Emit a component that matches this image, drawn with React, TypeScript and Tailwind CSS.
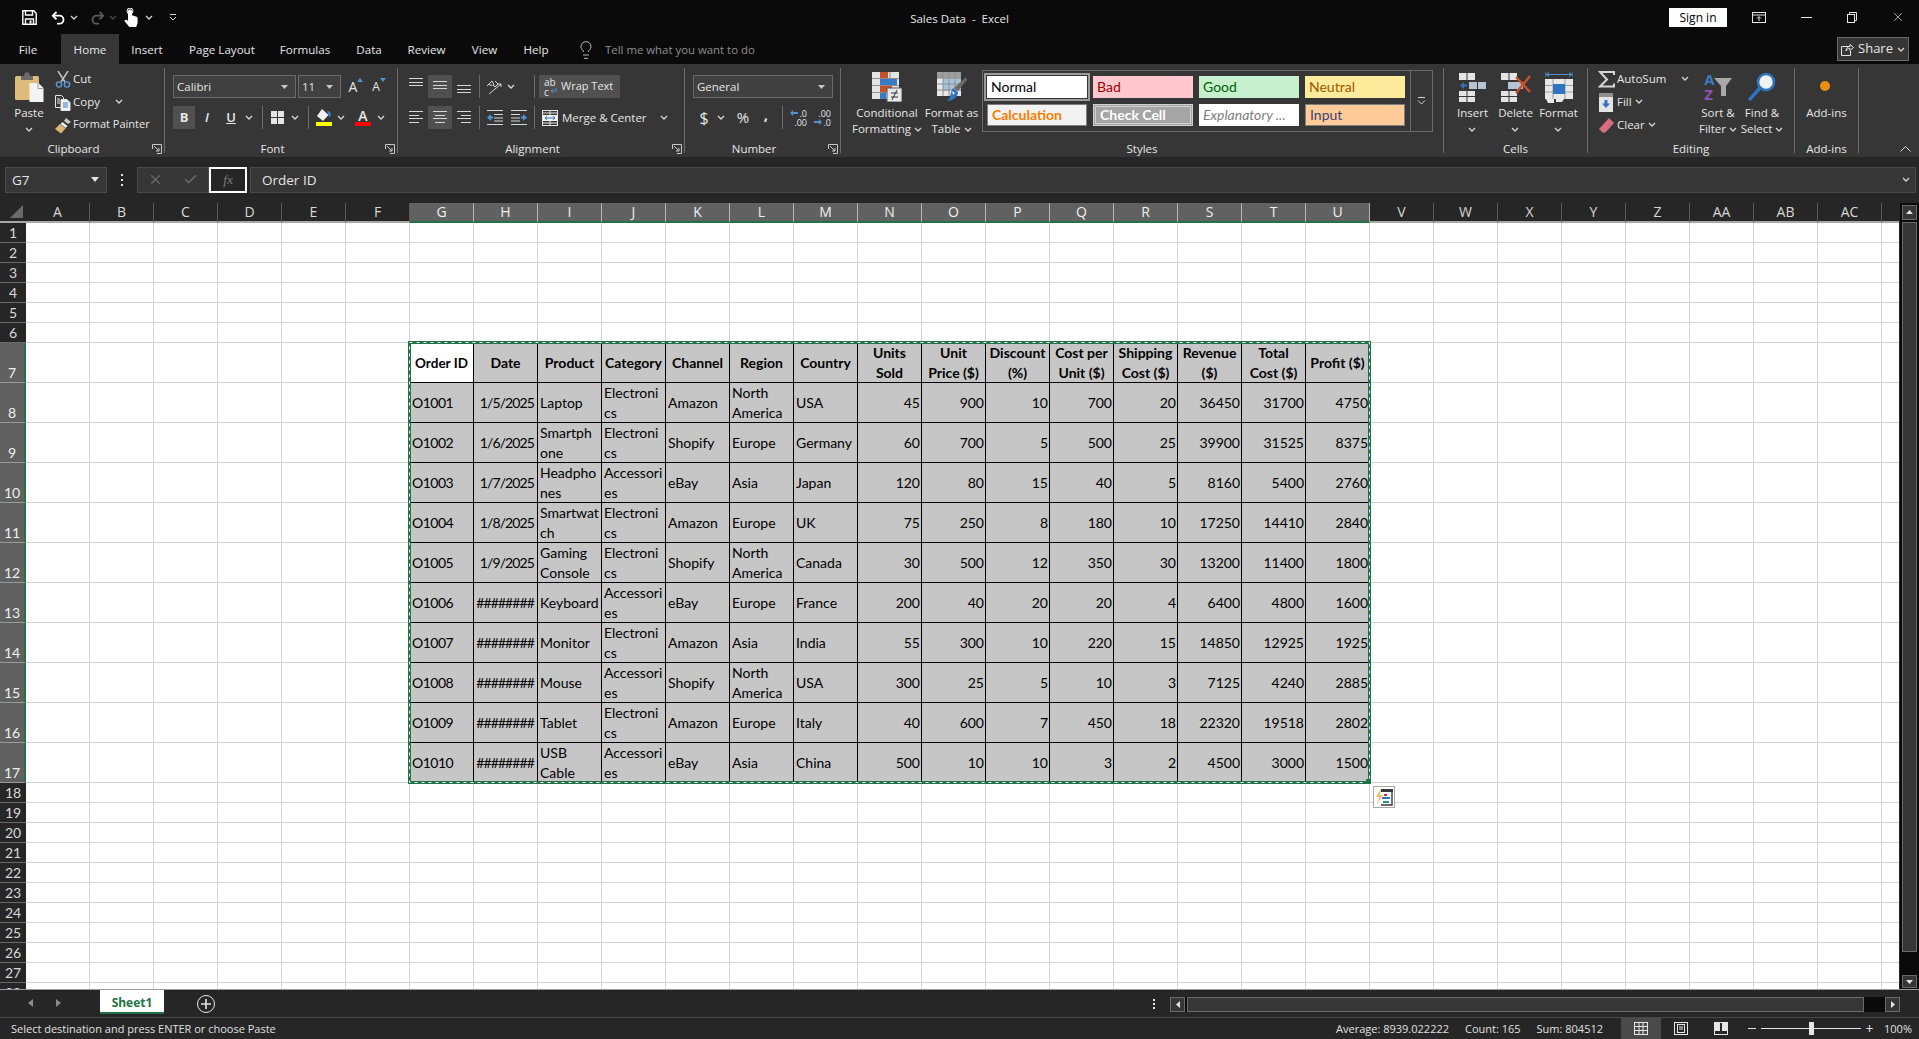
import React from 'react';
import { Lightbulb, Check, X } from 'lucide-react';

const COLS = ['A','B','C','D','E','F','G','H','I','J','K','L','M','N','O','P','Q','R','S','T','U','V','W','X','Y','Z','AA','AB','AC'];

const HEADERS = ['Order ID','Date','Product','Category','Channel','Region','Country','Units\nSold','Unit\nPrice ($)','Discount\n(%)','Cost per\nUnit ($)','Shipping\nCost ($)','Revenue\n($)','Total\nCost ($)','Profit ($)'];

type Cell = string | number;

const HASH = '########';
const DATA: Cell[][] = [
  ['O1001','1/5/2025','Laptop','Electroni\ncs','Amazon','North\nAmerica','USA',45,900,10,700,20,36450,31700,4750],
  ['O1002','1/6/2025','Smartph\none','Electroni\ncs','Shopify','Europe','Germany',60,700,5,500,25,39900,31525,8375],
  ['O1003','1/7/2025','Headpho\nnes','Accessori\nes','eBay','Asia','Japan',120,80,15,40,5,8160,5400,2760],
  ['O1004','1/8/2025','Smartwat\nch','Electroni\ncs','Amazon','Europe','UK',75,250,8,180,10,17250,14410,2840],
  ['O1005','1/9/2025','Gaming\nConsole','Electroni\ncs','Shopify','North\nAmerica','Canada',30,500,12,350,30,13200,11400,1800],
  ['O1006',HASH,'Keyboard','Accessori\nes','eBay','Europe','France',200,40,20,20,4,6400,4800,1600],
  ['O1007',HASH,'Monitor','Electroni\ncs','Amazon','Asia','India',55,300,10,220,15,14850,12925,1925],
  ['O1008',HASH,'Mouse','Accessori\nes','Shopify','North\nAmerica','USA',300,25,5,10,3,7125,4240,2885],
  ['O1009',HASH,'Tablet','Electroni\ncs','Amazon','Europe','Italy',40,600,7,450,18,22320,19518,2802],
  ['O1010',HASH,'USB\nCable','Accessori\nes','eBay','Asia','China',500,10,10,3,2,4500,3000,1500],
];

const Chev = ({ className = '' }: { className?: string }) => (
  <svg width="8" height="5" viewBox="0 0 8 5" className={className}>
    <path d="M1 1l3 3 3-3" fill="none" stroke="#d6d6d6" strokeWidth="1.3" />
  </svg>
);

const Caret = () => (
  <svg width="7" height="4" viewBox="0 0 7 4"><path d="M0 0h7L3.5 4z" fill="#c8c8c8" /></svg>
);

const Launcher = () => (
  <svg width="10" height="10" viewBox="0 0 10 10">
    <path d="M.5 5V.5H9.5V9.5H5" fill="none" stroke="#c8c8c8" />
    <path d="M2 2l5 5M7 4v3H4" fill="none" stroke="#c8c8c8" />
  </svg>
);

const Sep = ({ className = '' }: { className?: string }) => <div className={`w-px h-[23px] bg-[#6b6b6b] ${className}`} />;

const Group = ({ w, label, launcher, children }: { w: string; label: string; launcher?: boolean; children: React.ReactNode }) => (
  <div className={`${w} h-[85px] flex flex-col border-r border-[#6b6b6b] shrink-0`}>
    <div className="h-[75px] shrink-0">{children}</div>
    <div className="h-[12px] shrink-0 flex items-center">
      <div className="flex-1 text-center leading-[12px]">{label}</div>
      {launcher && <div className="w-[17px] flex justify-center pl-[3px]"><Launcher /></div>}
    </div>
  </div>
);

const BigButton = ({ w, icon, lines, chevInline }: { w: string; icon: React.ReactNode; lines: string[]; chevInline?: boolean }) => (
  <div className={`${w} shrink-0 flex flex-col items-center`}>
    <div className="mt-[4px] h-[30px] flex items-center justify-center">{icon}</div>
    <div className="mt-[3px] text-center leading-[16px] whitespace-nowrap">
      <div>{lines[0]}</div>
      {chevInline ? (
        <div className="flex items-center justify-center gap-[3px]">{lines[1]}<Chev /></div>
      ) : (
        <div className="h-[16px] flex items-center justify-center"><Chev /></div>
      )}
    </div>
  </div>
);

/* ---------- icons ---------- */

const SaveIcon = () => (
  <svg width="15" height="15" viewBox="0 0 15 15" fill="none" stroke="#fff" strokeWidth="1.4">
    <path d="M.8.8h11l2.4 2.4v11H.8z" />
    <path d="M3.5 1v4h7V1M3.5 14V9h8v5" />
    <rect x="7.5" y="10.5" width="2" height="3" fill="#fff" stroke="none" />
  </svg>
);

const UndoIcon = ({ c = '#fff', flip = false }: { c?: string; flip?: boolean }) => (
  <svg width="15" height="14" viewBox="0 0 15 14" fill="none" stroke={c} strokeWidth="1.8" className={flip ? '-scale-x-100' : ''}>
    <path d="M5.5 1L1.8 4.7l3.7 3.7" />
    <path d="M2 4.7h6.5a4 4 0 0 1 0 8H6" />
  </svg>
);

const TouchIcon = () => (
  <svg width="14" height="19" viewBox="0 0 14 19" fill="#fff">
    <path d="M4 3.2a2 2 0 0 1 4 0v4l4 1.2c1 .3 1.6 1 1.6 2V15l-1.4 4H5.4L.8 13.4c-.6-.8.2-2 1.4-1.6L4 12.8z" />
    <circle cx="6" cy="3" r="3" fill="none" stroke="#fff" />
  </svg>
);

const ScissorsIcon = () => (
  <svg width="16" height="17" viewBox="0 0 16 17" fill="none">
    <path d="M3 0l7 11M13 0L6 11" stroke="#bdbdbd" strokeWidth="1.6" />
    <circle cx="4" cy="13.5" r="2.6" stroke="#5c9bd6" strokeWidth="1.4" />
    <circle cx="12" cy="13.5" r="2.6" stroke="#5c9bd6" strokeWidth="1.4" />
  </svg>
);

const CopyIcon = () => (
  <svg width="16" height="16" viewBox="0 0 16 16">
    <path d="M.5.5h6l2 2v10h-8z" fill="#363636" stroke="#e6e6e6" />
    <path d="M6 4.5h6l3 3v8H6z" fill="#f2f2f2" stroke="#e6e6e6" />
    <path d="M8 8h5M8 10h5M8 12h5" stroke="#3a7cc4" />
    <path d="M2 4h3M2 6h3M2 8h3" stroke="#e6e6e6" />
  </svg>
);

const BrushIcon = () => (
  <svg width="18" height="17" viewBox="0 0 18 17">
    <path d="M12 1l5 4-3 2-4-3z" fill="#c8c8c8" />
    <path d="M8.5 5l5 4-2 2-5-4z" fill="#efefef" />
    <path d="M6 7l5.5 4.5L7 16.5 1 12z" fill="#d9b676" />
  </svg>
);

const PasteIcon = () => (
  <svg width="29" height="30" viewBox="0 0 29 30">
    <rect x="0" y="4" width="24" height="24" rx="1.5" fill="#dcbb7d" />
    <path d="M6 4h3l1-3.5h4L15 4h3v4H6z" fill="#6b6b6b" />
    <path d="M14.5 11h9l5 5v14h-14z" fill="#f3f3f3" />
    <path d="M23 11v5.5h5.5" fill="none" stroke="#9c9c9c" />
  </svg>
);

const BordersIcon = () => (
  <svg width="13" height="13" viewBox="0 0 13 13" fill="#e6e6e6">
    <rect width="6" height="6" /><rect x="7" width="6" height="6" />
    <rect y="7" width="6" height="6" /><rect x="7" y="7" width="6" height="6" />
  </svg>
);

const FillIcon = () => (
  <div className="flex flex-col items-center">
    <svg width="16" height="13" viewBox="0 0 16 13">
      <path d="M6 0l6.5 6L7 12 1 7z" fill="#f2f2f2" />
      <path d="M11 2c3 0 4 2 4 5l-2 1-1-3z" fill="#3a7cc4" />
    </svg>
    <div className="w-[16px] h-[4px] bg-[#ffff00]" />
  </div>
);

const FontColorIcon = () => (
  <div className="flex flex-col items-center leading-none">
    <span className="text-[14px] font-semibold h-[13px] leading-[13px] text-[#e6e6e6]">A</span>
    <div className="w-[16px] h-[4px] bg-[#ff0000]" />
  </div>
);

const Lines = ({ rows }: { rows: [number, number][] }) => (
  <svg width="16" height={rows.length * 3.5} viewBox={`0 0 16 ${rows.length * 3.5}`}>
    {rows.map(([a, b], i) => <rect key={i} x={a} y={Math.round(i * 3.5)} width={b - a} height="1" fill="#d6d6d6" />)}
  </svg>
);

const OrientIcon = () => (
  <svg width="18" height="16" viewBox="0 0 18 16" fill="none" stroke="#d6d6d6">
    <path d="M1 7l5-5 2 4M2.5 5.5l4 1" />
    <path d="M9 2l3 3-3 3-2-2" />
    <path d="M3 15L15 5M15 5h-3M15 5v3" />
  </svg>
);

const WrapIcon = () => (
  <div className="w-[17px] flex flex-col text-[10px] leading-[10px] text-[#e6e6e6]">
    <span>ab</span>
    <div className="flex items-center">
      <span>c</span>
      <svg width="8" height="7" viewBox="0 0 8 7" fill="none" stroke="#4f93d6"><path d="M7 0v3H2M4 1L2 3l2 2" /></svg>
    </div>
  </div>
);

const MergeIcon = () => (
  <svg width="16" height="16" viewBox="0 0 16 16">
    <rect x=".5" y=".5" width="15" height="15" fill="#363636" stroke="#e6e6e6" />
    <rect x="1" y="5" width="14" height="6" fill="#f2f2f2" />
    <path d="M1 3h14M8 1v4M8 11v4M1 13h14" stroke="#e6e6e6" />
    <path d="M3 8h10M5 6.3L3 8l2 1.7M11 6.3L13 8l-2 1.7" stroke="#2f74c0" fill="none" />
  </svg>
);

const IndentIcon = ({ flip = false }: { flip?: boolean }) => (
  <svg width="16" height="15" viewBox="0 0 16 15" className={flip ? '-scale-x-100' : ''}>
    <path d="M0 .5h16M7 4.5h9M7 8h9M7 11h9M0 14.5h16" stroke="#d6d6d6" />
    <path d="M0 7.5l4-3.5v2.4h2v2.2H4V11z" fill="#4f93d6" />
  </svg>
);

const DecimalIcon = ({ inc }: { inc: boolean }) => (
  <div className="w-[20px] flex flex-col text-[9px] leading-[9px] text-[#e6e6e6] items-end">
    <div className="flex items-center gap-[1px]">
      {inc && <svg width="8" height="6" viewBox="0 0 8 6"><path d="M0 3l3-3v2h5v2H3v2z" fill="#4f93d6" /></svg>}
      <span>{inc ? '.0' : '.00'}</span>
    </div>
    <div className="flex items-center gap-[1px]">
      {!inc && <svg width="8" height="6" viewBox="0 0 8 6"><path d="M8 3L5 0v2H0v2h5v2z" fill="#4f93d6" /></svg>}
      <span>{inc ? '.00' : '.0'}</span>
    </div>
  </div>
);

const CondIcon = () => (
  <svg width="30" height="30" viewBox="0 0 30 30">
    <rect x="0" y="0" width="27" height="27" fill="#e4e4e4" />
    <path d="M0 6.5h27M0 13.5h27M0 20.5h27M9 0v27M18 0v27" stroke="#8e8e8e" />
    <rect x="8" y="0" width="8" height="6" fill="#c8512a" />
    <rect x="8" y="7" width="17" height="6" fill="#3a7cc4" />
    <rect x="8" y="14" width="12" height="6" fill="#c8512a" />
    <rect x="8" y="21" width="6" height="6" fill="#3a7cc4" />
    <rect x="15" y="16" width="15" height="14" fill="#e8e8e8" stroke="#555" />
    <path d="M19 21h7M19 25h7M25 18l-5 10" stroke="#333" />
  </svg>
);

const TableIcon = () => (
  <svg width="30" height="30" viewBox="0 0 30 30">
    <rect x="0" y="0" width="24" height="6" fill="#9e9e9e" />
    <rect x="0" y="6" width="24" height="18" fill="#e8e8e8" />
    <rect x="6" y="6" width="18" height="13" fill="#a9c2d6" />
    <path d="M0 6h24M0 12h24M0 18h24M6 0v24M12 0v24M18 0v24" stroke="#8e8e8e" />
    <path d="M29 5l1 3-9 11-4-3z" fill="#6a6a6a" />
    <path d="M16 16l5 4c0 5-5 9-11 9 4-3 3-8 6-13z" fill="#2f74c0" />
    <path d="M15 19l3 2-2 2z" fill="#e8e8e8" />
  </svg>
);

const InsertIcon = () => (
  <svg width="27" height="29" viewBox="0 0 27 29">
    <rect x="0" y="0" width="16" height="7" fill="#e4e4e4" /><path d="M8 0v7" stroke="#363636" />
    <rect x="0" y="18" width="16" height="11" fill="#e4e4e4" /><path d="M8 18v11M0 23.5h16" stroke="#363636" />
    <rect x="10" y="9" width="17" height="7" fill="#b4c4d2" /><path d="M18.5 9v7" stroke="#363636" />
    <path d="M1 12.5l4-3.5v2.4h3v2.2H5V16z" fill="#2f74c0" />
  </svg>
);

const DeleteIcon = () => (
  <svg width="30" height="29" viewBox="0 0 30 29">
    <rect x="0" y="0" width="16" height="7" fill="#e4e4e4" /><path d="M8 0v7" stroke="#363636" />
    <rect x="0" y="18" width="16" height="11" fill="#e4e4e4" /><path d="M8 18v11M0 23.5h16" stroke="#363636" />
    <rect x="7" y="9" width="15" height="7" fill="#b4c4d2" />
    <path d="M15 4l14 15M29 3L15 20" stroke="#c8512a" strokeWidth="2.4" />
  </svg>
);

const FormatIcon = () => (
  <svg width="28" height="31" viewBox="0 0 28 31">
    <path d="M0 0v5M28 0v5M1 2.5h26M1 2.5l3-2M1 2.5l3 2M27 2.5l-3-2M27 2.5l-3 2" stroke="#4f93d6" fill="none" />
    <rect x="0" y="7" width="28" height="20" fill="#e8e8e8" />
    <path d="M0 13.5h28M0 20h28M8 7v20M20 7v20" stroke="#9e9e9e" />
    <rect x="8" y="12" width="12" height="10" fill="#2f74c0" />
    <path d="M1 27h8v4H3zM11 27h8l-2 3h-6z" fill="#e8e8e8" />
  </svg>
);

const SortIcon = () => (
  <div className="flex items-center h-[30px]">
    <div className="flex flex-col font-bold text-[15px] leading-[15px] mr-[-1px]">
      <span className="text-[#3a7cc4]">A</span>
      <span className="text-[#8a54b0]">Z</span>
    </div>
    <svg width="18" height="18" viewBox="0 0 18 18">
      <path d="M0 0h18l-6 8v10h-5V8z" fill="#a9a9a9" />
    </svg>
  </div>
);

const FindIcon = () => (
  <svg width="28" height="30" viewBox="0 0 28 30" fill="none">
    <circle cx="18" cy="10" r="8" fill="#f2f2f2" stroke="#2f74c0" strokeWidth="2.6" />
    <path d="M12 16L2 27" stroke="#2f74c0" strokeWidth="3.4" strokeLinecap="round" />
  </svg>
);

const SumIcon = () => (
  <svg width="17" height="17" viewBox="0 0 17 17" fill="none"><path d="M16 4V1H2l7 7.5L2 15.5h14v-3" stroke="#d6d6d6" strokeWidth="2" /></svg>
);

const FillDownIcon = () => (
  <svg width="14" height="19" viewBox="0 0 14 19">
    <rect width="14" height="19" fill="#e4e4e4" /><rect width="14" height="4" fill="#8e8e8e" />
    <path d="M7 15L3 10.5h2.5V7h3v3.5H11z" fill="#2f74c0" />
  </svg>
);

const EraserIcon = () => (
  <svg width="15" height="15" viewBox="0 0 15 15"><path d="M10 0l5 5-8 9-3 1-4-4z" fill="#d96b82" /></svg>
);

const PasteOptions = () => (
  <svg width="18" height="18" viewBox="0 0 18 18">
    <path d="M6 0L1 9h3l-2 7 6-9H5z" fill="#e9c27a" />
    <path d="M6 1h12v3H6z" fill="#3a3a3a" />
    <path d="M17 1v16H6" fill="none" stroke="#3a3a3a" strokeWidth="1.4" />
    <rect x="9" y="6" width="3" height="2" fill="#c0392b" />
    <rect x="7" y="9" width="8" height="2" fill="#2f74c0" />
    <rect x="8" y="13" width="6" height="2" fill="#2c8a8a" />
  </svg>
);

/* ---------- sections ---------- */

const TitleBar = () => (
  <div className="h-[34px] grid grid-cols-[1fr_auto_1fr] items-center text-[#e6e6e6]">
    <div className="flex items-center pl-[22px] pt-[1px]">
      <SaveIcon />
      <div className="ml-[14px]"><UndoIcon /></div>
      <Chev className="ml-[4px]" />
      <div className="ml-[12px]"><UndoIcon c="#5a5a5a" flip /></div>
      <Chev className="ml-[4px] opacity-30" />
      <div className="ml-[7px]"><TouchIcon /></div>
      <Chev className="ml-[7px]" />
      <svg width="8" height="8" viewBox="0 0 8 8" className="ml-[16px]"><path d="M1 .5h6M1 3l3 3 3-3" fill="none" stroke="#d6d6d6" /></svg>
    </div>
    <div className="text-[11.5px] whitespace-pre pt-[4px]">Sales Data  -  Excel</div>
    <div className="flex items-center justify-end">
      <div className="w-[58px] h-[19px] bg-white text-black text-[12px] flex items-center justify-center mt-[1px]">Sign in</div>
      <div className="w-[64px] flex justify-center">
        <svg width="14" height="11" viewBox="0 0 14 11" fill="none" stroke="#e6e6e6"><rect x=".5" y=".5" width="13" height="10" /><path d="M1 3h12M7 9V5M5 6.5l2-2 2 2" /></svg>
      </div>
      <div className="w-[30px] flex justify-center">
        <svg width="11" height="1" viewBox="0 0 11 1"><rect width="11" height="1" fill="#e6e6e6" /></svg>
      </div>
      <div className="w-[62px] flex justify-center">
        <svg width="10" height="11" viewBox="0 0 10 11" fill="none" stroke="#e6e6e6"><rect x=".5" y="2.5" width="7" height="8" /><path d="M2.5 2.5v-2h7v8h-2" /></svg>
      </div>
      <div className="w-[36px] flex justify-center pr-[6px]"><X size={14} strokeWidth={1.2} color="#e6e6e6" /></div>
    </div>
  </div>
);

const TABS: [string, string][] = [['File','w-[61px] pr-[5px]'],['Home','w-[58px] bg-[#363636]'],['Insert','w-[56px]'],['Page Layout','w-[94px]'],['Formulas','w-[72px]'],['Data','w-[56px]'],['Review','w-[59px]'],['View','w-[57px]'],['Help','w-[46px]']];

const TabStrip = () => (
  <div className="h-[30px] flex text-[11.6px] text-[#e6e6e6]">
    {TABS.map(([name, cls]) => (
      <div key={name} className={`${cls} h-full flex items-center justify-center pt-[1px]`}>{name}</div>
    ))}
    <div className="ml-[17px] flex items-center text-[#8f8f8f] pt-[1px]">
      <Lightbulb size={20} strokeWidth={1.1} color="#c8c8c8" />
      <span className="ml-[9px] text-[11.4px]">Tell me what you want to do</span>
    </div>
    <div className="ml-auto mr-[10px] mt-[3px] w-[72px] h-[24px] bg-[#363636] border border-[#6a6a6a] flex items-center justify-center gap-[4px] text-[13px]">
      <svg width="13" height="13" viewBox="0 0 13 13" fill="none" stroke="#e6e6e6"><path d="M8 3.5H.5v9h9V8M5 8c0-3 2-4.500 4-4.500V1.500l3.500 3-3.500 3V5.500C7 5.500 6 6.500 5 8z" /></svg>
      <span>Share</span>
      <Chev />
    </div>
  </div>
);

const Combo = ({ w, text, className = '' }: { w: string; text: string; className?: string }) => (
  <div className={`${w} h-[23px] bg-[#404040] border border-[#6a6a6a] flex items-center justify-between pl-[3px] pr-[7px] ${className}`}>
    <span>{text}</span><Caret />
  </div>
);

const Small = ({ w, className = '', children }: { w: string; className?: string; children: React.ReactNode }) => (
  <div className={`${w} h-[23px] shrink-0 flex items-center justify-center ${className}`}>{children}</div>
);

const EditRow = ({ icon, children }: { icon: React.ReactNode; children: React.ReactNode }) => (
  <div className="h-[23px] flex items-center">
    <div className="w-[20px] flex justify-center shrink-0">{icon}</div>
    <div className="flex items-center flex-1 pb-[2px]">{children}</div>
  </div>
);

const STYLES: { t: string; c: string }[] = [
  { t: 'Normal', c: 'bg-white text-black outline-2 outline-offset-1 outline-[#9b9b9b]' },
  { t: 'Bad', c: 'bg-[#ffc7ce] text-[#9c0006]' },
  { t: 'Good', c: 'bg-[#c6efce] text-[#006100]' },
  { t: 'Neutral', c: 'bg-[#ffeb9c] text-[#9c5700]' },
  { t: 'Calculation', c: 'bg-[#f2f2f2] text-[#fa7d00] font-bold border border-[#7f7f7f]' },
  { t: 'Check Cell', c: 'bg-[#a5a5a5] text-white font-bold border-[3px] border-double border-[#d0d0d0]' },
  { t: 'Explanatory ...', c: 'bg-white text-[#7f7f7f] italic' },
  { t: 'Input', c: 'bg-[#ffcc99] text-[#3f3f76] border border-[#7f7f7f]' },
];

const Ribbon = () => (
  <div className="h-[93px] bg-[#363636] pt-[4px] flex text-[11.5px] text-[#e6e6e6] whitespace-nowrap">
    <Group w="w-[165px]" label="Clipboard" launcher>
      <div className="flex">
        <div className="w-[53px] pl-[5px]">
          <BigButton w="w-full" icon={<PasteIcon />} lines={['Paste']} />
        </div>
        <div>
          <EditRow icon={<ScissorsIcon />}>Cut</EditRow>
          <div className="w-[70px]"><EditRow icon={<CopyIcon />}>Copy<Chev className="ml-auto" /></EditRow></div>
          <EditRow icon={<BrushIcon />}><span className="text-[11px]">Format Painter</span></EditRow>
        </div>
      </div>
    </Group>

    <Group w="w-[233px]" label="Font" launcher>
      <div className="pt-[7px] pl-[8px]">
        <div className="flex items-center h-[23px]">
          <Combo w="w-[123px]" text="Calibri" />
          <Combo w="w-[43px]" text="11" className="ml-[2px]" />
          <Small w="w-[22px]" className="ml-[4px] text-[14px]"><span>A</span><svg width="6" height="4" viewBox="0 0 6 4" className="self-start mt-[3px]"><path d="M3 0l3 4H0z" fill="#4f93d6" /></svg></Small>
          <Small w="w-[22px]" className="ml-[1px] text-[12px]"><span>A</span><svg width="6" height="4" viewBox="0 0 6 4" className="self-start mt-[3px]"><path d="M3 4l3-4H0z" fill="#4f93d6" /></svg></Small>
        </div>
        <div className="flex items-center h-[23px] mt-[8px]">
          <Small w="w-[22px]" className="bg-[#505050] font-bold text-[13px]">B</Small>
          <Small w="w-[24px]" className="italic font-semibold text-[13px]">I</Small>
          <Small w="w-[24px]" className="underline font-semibold text-[13px]">U</Small>
          <Small w="w-[12px]"><Chev /></Small>
          <Sep className="ml-[7px]" />
          <Small w="w-[16px]" className="ml-[6px]"><BordersIcon /></Small>
          <Small w="w-[10px]" className="ml-[5px]"><Chev /></Small>
          <Sep className="ml-[8px]" />
          <Small w="w-[16px]" className="ml-[7px]"><FillIcon /></Small>
          <Small w="w-[10px]" className="ml-[4px]"><Chev /></Small>
          <Small w="w-[16px]" className="ml-[9px]"><FontColorIcon /></Small>
          <Small w="w-[10px]" className="ml-[5px]"><Chev /></Small>
        </div>
      </div>
    </Group>

    <Group w="w-[287px]" label="Alignment" launcher>
      <div className="pt-[7px] pl-[6px]">
        <div className="flex h-[23px]">
          <Small w="w-[24px]" className="items-start pt-[3px]"><Lines rows={[[1,15],[1,15],[1,15]]} /></Small>
          <Small w="w-[24px]" className="bg-[#505050]"><Lines rows={[[1,15],[1,15],[1,15]]} /></Small>
          <Small w="w-[24px]" className="items-end pb-[3px]"><Lines rows={[[1,15],[1,15],[1,15]]} /></Small>
          <Sep className="ml-[3px]" />
          <Small w="w-[20px]" className="ml-[5px]"><OrientIcon /></Small>
          <Small w="w-[10px]" className="ml-[1px]"><Chev /></Small>
          <Sep className="ml-[18px]" />
          <div className="ml-[4px] w-[81px] h-[23px] bg-[#505050] flex items-center pl-[5px]">
            <WrapIcon /><span className="text-[11px]">Wrap Text</span>
          </div>
        </div>
        <div className="flex h-[23px] mt-[8px]">
          <Small w="w-[24px]"><Lines rows={[[1,15],[1,11],[1,15],[1,11]]} /></Small>
          <Small w="w-[24px]" className="bg-[#505050]"><Lines rows={[[1,15],[3,13],[1,15],[3,13]]} /></Small>
          <Small w="w-[24px]"><Lines rows={[[1,15],[5,15],[1,15],[5,15]]} /></Small>
          <Sep className="ml-[3px]" />
          <Small w="w-[24px]" className="ml-[3px]"><IndentIcon /></Small>
          <Small w="w-[24px]"><IndentIcon flip /></Small>
          <Sep className="ml-[3px]" />
          <Small w="w-[16px]" className="ml-[7px]"><MergeIcon /></Small>
          <span className="ml-[4px] w-[88px] leading-[23px]">Merge &amp; Center</span>
          <Small w="w-[10px]" className="ml-[9px]"><Chev /></Small>
        </div>
      </div>
    </Group>

    <Group w="w-[156px]" label="Number" launcher>
      <div className="pt-[7px] pl-[8px]">
        <Combo w="w-[140px]" text="General" />
        <div className="flex h-[23px] mt-[8px]">
          <Small w="w-[22px]" className="text-[16px]">$</Small>
          <Small w="w-[10px]" className="ml-[1px]"><Chev /></Small>
          <Small w="w-[22px]" className="ml-[6px] text-[15px]">%</Small>
          <Small w="w-[22px]" className="ml-[1px] text-[15px] font-bold pb-[6px]">,</Small>
          <Sep className="ml-[5px]" />
          <Small w="w-[24px]" className="ml-[2px]"><DecimalIcon inc /></Small>
          <Small w="w-[24px]"><DecimalIcon inc={false} /></Small>
        </div>
      </div>
    </Group>

    <Group w="w-[603px]" label="Styles">
      <div className="flex pl-[13px]">
        <BigButton w="w-[66px]" icon={<CondIcon />} lines={['Conditional', 'Formatting']} chevInline />
        <div className="pl-[1px]">
          <BigButton w="w-[61px]" icon={<TableIcon />} lines={['Format as', 'Table']} chevInline />
        </div>
        <div className="mt-[2px] w-[451px] h-[62px] border border-[#6a6a6a] flex">
          <div className="w-[427px] pt-[5px] pl-[4px] grid grid-cols-[100px_100px_100px_100px] auto-rows-[22px] gap-x-[6px] gap-y-[6px] text-[14px] [font-family:Lato,sans-serif]">
            {STYLES.map(s => (
              <div key={s.t} className={`${s.c} flex items-center pl-[4px] pb-[2px] overflow-hidden`}>{s.t}</div>
            ))}
          </div>
          <div className="flex-1 border-l border-[#6a6a6a] flex items-center justify-center">
            <svg width="9" height="8" viewBox="0 0 9 8" fill="none" stroke="#d6d6d6"><path d="M1 .5h7M1 3.500l3.500 3.500L8 3.500" /></svg>
          </div>
        </div>
      </div>
    </Group>

    <Group w="w-[144px]" label="Cells">
      <div className="flex pl-[7px]">
        <BigButton w="w-[43px]" icon={<InsertIcon />} lines={['Insert']} />
        <BigButton w="w-[43px]" icon={<DeleteIcon />} lines={['Delete']} />
        <BigButton w="w-[43px]" icon={<FormatIcon />} lines={['Format']} />
      </div>
    </Group>

    <Group w="w-[207px]" label="Editing">
      <div className="flex">
        <div className="w-[108px] pl-[8px] shrink-0">
          <EditRow icon={<SumIcon />}><span className="ml-[1px]">AutoSum</span><Chev className="ml-auto mr-[7px]" /></EditRow>
          <EditRow icon={<FillDownIcon />}><span className="ml-[1px]">Fill</span><Chev className="ml-[3px]" /></EditRow>
          <EditRow icon={<EraserIcon />}><span className="ml-[1px]">Clear</span><Chev className="ml-[3px]" /></EditRow>
        </div>
        <BigButton w="w-[44px]" icon={<SortIcon />} lines={['Sort &', 'Filter']} chevInline />
        <BigButton w="w-[44px]" icon={<FindIcon />} lines={['Find &', 'Select']} chevInline />
      </div>
    </Group>

    <Group w="w-[64px]" label="Add-ins">
      <div className="flex flex-col items-center">
        <div className="mt-[4px] h-[30px] flex items-center justify-center pr-[3px]">
          <div className="w-[10px] h-[10px] rounded-full bg-[#f08c10] mt-[-2px]" />
        </div>
        <div className="mt-[3px] leading-[16px]">Add-ins</div>
      </div>
    </Group>

    <div className="ml-auto mr-[8px] self-end mb-[5px]">
      <svg width="11" height="6" viewBox="0 0 11 6" fill="none" stroke="#d6d6d6"><path d="M.5 5.500l5-5 5 5" /></svg>
    </div>
  </div>
);

const FormulaBar = () => (
  <div className="mt-[10px] h-[26px] flex text-[13.5px] text-[#e6e6e6]">
    <div className="ml-[5px] w-[102px] bg-[#363636] border border-[#4a4a4a] flex items-center justify-between pl-[6px] pr-[7px]">
      <span className="pt-[1px]">G7</span>
      <svg width="8" height="5" viewBox="0 0 8 5"><path d="M0 0h8L4 5z" fill="#e6e6e6" /></svg>
    </div>
    <div className="w-[30px] flex flex-col items-center justify-center gap-[3px]">
      <div className="w-[2px] h-[2px] bg-[#e6e6e6]" /><div className="w-[2px] h-[2px] bg-[#e6e6e6]" /><div className="w-[2px] h-[2px] bg-[#e6e6e6]" />
    </div>
    <div className="w-[72px] bg-[#363636] border border-[#4a4a4a] flex items-center">
      <div className="w-[36px] flex justify-center"><X size={15} color="#6a6a6a" strokeWidth={2} /></div>
      <div className="w-[36px] flex justify-center"><Check size={15} color="#6a6a6a" strokeWidth={2.6} /></div>
    </div>
    <div className="w-[38px] bg-[#262626] border-2 border-white flex items-center justify-center italic text-[#7a7a7a] [font-family:'Liberation_Serif',serif]">fx</div>
    <div className="ml-[3px] flex-1 mr-[3px] bg-[#363636] border border-[#4a4a4a] flex items-center pl-[11px] pr-[5px] justify-between">
      <span className="pt-[1px]">Order ID</span>
      <Chev />
    </div>
  </div>
);

const ColHeader = () => (
  <div className="flex h-[20px]">
    <div className="w-[26px] shrink-0 bg-[#262626] flex items-end justify-end pr-[3px] pb-[3px] border-b-2 border-[#a8a8a8]">
      <svg width="13" height="13" viewBox="0 0 13 13"><path d="M13 0v13H0z" fill="#6a6a6a" /></svg>
    </div>
    {COLS.map((c, i) => {
      const sel = i >= 6 && i <= 20;
      return (
        <div key={c} className={`w-[64px] shrink-0 flex items-center justify-center border-r text-[14px] ${sel ? 'bg-[#616161] border-[#b4b4b4] border-b-2 border-b-[#217346] text-[#f0f0f0]' : 'bg-[#262626] border-[#5a5a5a] border-b-2 border-b-[#a8a8a8] text-[#d8d8d8]'}`}>{c}</div>
      );
    })}
    <div className="flex-1 border-b-2 border-[#a8a8a8]" />
  </div>
);

const RowHead = ({ n, sel, tall }: { n: number; sel: boolean; tall: boolean }) => (
  <div className={`w-[26px] shrink-0 flex justify-center text-[14px] leading-[19px] border-b ${tall ? 'items-end' : 'items-center'} ${sel ? 'bg-[#616161] text-[#f0f0f0] border-[#9a9a9a] border-r-2 border-r-[#217346]' : 'bg-[#262626] text-[#d8d8d8] border-[#6a6a6a]'}`}>{n}</div>
);

const BlankCells = ({ n }: { n: number }) => (
  <>
    {Array.from({ length: n }).map((_, i) => (
      <div key={i} className="w-[64px] shrink-0 border-r border-b border-[#d4d4d4]" />
    ))}
  </>
);

const dataCellClass = (v: Cell, i: number) => {
  if (i === 0) return 'pl-[2px] tracking-[-0.5px]';
  if (i === 1) return 'justify-end pr-[3px] tracking-[-0.9px]';
  return typeof v === 'number' ? 'justify-end pr-[1px]' : 'pl-[2px]';
};

const SheetRow = ({ n }: { n: number }) => {
  const tall = n >= 7 && n <= 17;
  return (
    <div className={`flex shrink-0 ${tall ? 'h-[40px]' : 'h-[20px]'}`}>
      <RowHead n={n} sel={tall} tall={tall} />
      {tall ? (
        <>
          <BlankCells n={6} />
          {n === 7
            ? HEADERS.map((h, i) => (
                <div key={h} className={`w-[64px] shrink-0 border-r border-b border-black pt-[2px] flex items-center justify-center text-center font-bold leading-[20px] whitespace-pre-line ${i === 0 ? 'bg-white text-[13.5px]' : 'bg-[#c6c6c6]'}`}>{h}</div>
              ))
            : DATA[n - 8].map((v, i) => (
                <div key={i} className={`w-[64px] shrink-0 border-r border-b border-black bg-[#c6c6c6] pt-[2px] flex items-center leading-[20px] whitespace-pre-line overflow-hidden ${dataCellClass(v, i)}`}>{v}</div>
              ))}
          <BlankCells n={8} />
        </>
      ) : (
        <BlankCells n={29} />
      )}
      <div className="flex-1 border-b border-[#d4d4d4]" />
    </div>
  );
};

const Sheet = () => (
  <div className="flex h-[787px] mt-[10px] overflow-hidden">
    <div className="w-[1899px] shrink-0 relative overflow-hidden flex flex-col">
      <ColHeader />
      <div className="bg-white text-black text-[14px] [font-family:Lato,sans-serif] flex flex-col">
        {Array.from({ length: 28 }).map((_, i) => <SheetRow key={i} n={i + 1} />)}
      </div>
      {/* copy selection around the table */}
      <div className="absolute left-[408px] top-[138px] w-[963px] h-[443px] border-[3px] border-[#217346]">
        <svg width="961" height="441" className="absolute -left-[2px] -top-[2px]">
          <rect x="0.5" y="0.5" width="960" height="440" fill="none" stroke="#fff" strokeDasharray="3 4" />
        </svg>
        <div className="absolute -right-[3px] -bottom-[3px] w-[5px] h-[5px] bg-[#217346]" />
      </div>
      <div className="absolute left-[1373px] top-[583px] w-[22px] h-[22px] bg-white border border-[#a8a8a8] flex items-center justify-center">
        <PasteOptions />
      </div>
    </div>
    <div className="flex-1 ml-[1px] bg-[#0a0a0a] flex flex-col items-center pt-[2px] pb-[1px] pr-[1px]">
      <div className="w-[15px] h-[15px] border border-[#6a6a6a] bg-[#363636] flex items-center justify-center">
        <svg width="7" height="4" viewBox="0 0 7 4"><path d="M3.500 0L7 4H0z" fill="#e6e6e6" /></svg>
      </div>
      <div className="w-[15px] h-[730px] mt-[2px] bg-[#363636] border border-[#6a6a6a]" />
      <div className="mt-auto w-[15px] h-[13px] border border-[#6a6a6a] bg-[#363636] flex items-center justify-center">
        <svg width="7" height="4" viewBox="0 0 7 4"><path d="M0 0h7L3.500 4z" fill="#e6e6e6" /></svg>
      </div>
    </div>
  </div>
);

const SheetBar = () => (
  <div className="h-[29px] flex border-t border-[#9a9a9a] text-[#d8d8d8] border-b-[#4a4a4a] border-b">
    <div className="w-[100px] flex items-center pl-[28px] gap-[23px] pb-[2px]">
      <svg width="5" height="8" viewBox="0 0 5 8"><path d="M5 0v8L0 4z" fill="#8a8a8a" /></svg>
      <svg width="5" height="8" viewBox="0 0 5 8"><path d="M0 0v8l5-4z" fill="#8a8a8a" /></svg>
    </div>
    <div className="w-[64px] h-[24px] bg-white border-b-2 border-[#217346] text-[#217346] font-bold text-[12px] flex items-center justify-center pt-[4px]">Sheet1</div>
    <div className="ml-[33px] w-[18px] h-[18px] mt-[5px] rounded-full border border-[#e6e6e6] flex items-center justify-center">
      <svg width="10" height="10" viewBox="0 0 10 10"><path d="M5 0v10M0 5h10" stroke="#e6e6e6" strokeWidth="1.6" /></svg>
    </div>
    <div className="ml-[937px] w-[4px] flex flex-col items-center justify-center gap-[2px]">
      <div className="w-[2px] h-[2px] bg-[#e6e6e6]" /><div className="w-[2px] h-[2px] bg-[#e6e6e6]" /><div className="w-[2px] h-[2px] bg-[#e6e6e6]" />
    </div>
    <div className="ml-[14px] w-[730px] h-[15px] mt-[7px] bg-[#0a0a0a] flex">
      <div className="w-[15px] border border-[#6a6a6a] bg-[#363636] flex items-center justify-center">
        <svg width="4" height="7" viewBox="0 0 4 7"><path d="M4 0v7L0 3.500z" fill="#e6e6e6" /></svg>
      </div>
      <div className="w-[677px] ml-[2px] bg-[#363636] border border-[#6a6a6a]" />
      <div className="ml-auto w-[15px] border border-[#6a6a6a] bg-[#363636] flex items-center justify-center">
        <svg width="4" height="7" viewBox="0 0 4 7"><path d="M0 0v7l4-3.500z" fill="#e6e6e6" /></svg>
      </div>
    </div>
  </div>
);

const StatusBar = () => (
  <div className="flex-1 flex items-center text-[11px] text-[#e0e0e0] whitespace-nowrap">
    <span className="ml-[11px] pt-[2px]">Select destination and press ENTER or choose Paste</span>
    <div className="ml-auto flex items-center h-full">
      <span className="pt-[2px]">Average: 8939.022222</span>
      <span className="ml-[16px] pt-[2px]">Count: 165</span>
      <span className="ml-[16px] pt-[2px]">Sum: 804512</span>
      <div className="ml-[18px] w-[40px] h-full bg-[#4a4a4a] flex items-center justify-center">
        <svg width="14" height="13" viewBox="0 0 14 13" fill="none" stroke="#e6e6e6"><rect x=".5" y=".5" width="13" height="12" /><path d="M5 1v11M9 1v11M1 4.500h12M1 8.500h12" /></svg>
      </div>
      <div className="w-[40px] flex justify-center">
        <svg width="14" height="13" viewBox="0 0 14 13" fill="none" stroke="#e6e6e6"><rect x=".5" y=".5" width="13" height="12" /><rect x="3.500" y="2.500" width="7" height="8" /><path d="M5 5h4M5 7h4" /></svg>
      </div>
      <div className="w-[40px] flex justify-center">
        <svg width="14" height="13" viewBox="0 0 14 13"><rect x=".5" y=".5" width="13" height="12" fill="none" stroke="#e6e6e6" /><rect x="1" y="1" width="5" height="8" fill="#e6e6e6" /><rect x="8" y="1" width="5" height="8" fill="#e6e6e6" /></svg>
      </div>
      <div className="ml-[7px] w-[8px] h-px bg-[#e6e6e6]" />
      <div className="ml-[5px] w-[100px] h-px bg-[#e6e6e6] flex items-center justify-center">
        <div className="w-[5px] h-[13px] bg-[#e6e6e6]" />
      </div>
      <div className="ml-[4px] text-[14px] w-[9px] flex justify-center">+</div>
      <span className="ml-[10px] mr-[7px] pt-[2px]">100%</span>
    </div>
  </div>
);

export default function App() {
  return (
    <div className="w-[1919px] h-[1039px] overflow-hidden flex flex-col bg-[#262626] [font-family:'Open_Sans',sans-serif]">
      <div className="bg-[#0a0a0a]">
        <TitleBar />
        <TabStrip />
      </div>
      <Ribbon />
      <FormulaBar />
      <Sheet />
      <SheetBar />
      <StatusBar />
    </div>
  );
}
